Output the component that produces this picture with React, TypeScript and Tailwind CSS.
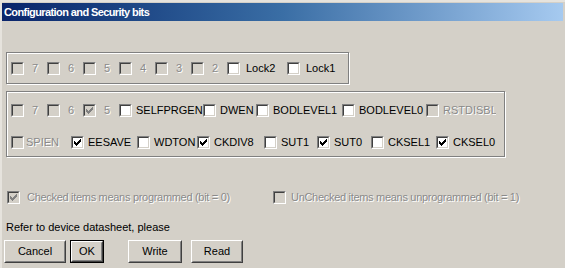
import React from 'react';

interface BitItem {
  label: string;
  width: string;
  checked?: boolean;
  disabled?: boolean;
  gap?: string;
  tight?: boolean;
}

// Classic sunken checkbox
const CheckBox: React.FC<{ checked?: boolean; disabled?: boolean }> = ({ checked, disabled }) => (
  <span className="shrink-0 w-[13px] h-[13px] border border-t-[#808080] border-l-[#808080] border-r-white border-b-white">
    <span
      className={
        'flex items-center justify-center w-[11px] h-[11px] border border-t-[#404040] border-l-[#404040] border-r-[#d4d0c8] border-b-[#d4d0c8] ' +
        (disabled ? 'bg-[#d4d0c8]' : 'bg-white')
      }
    >
      {checked && (
        <svg width="7" height="7" viewBox="0 0 7 7">
          <path
            d="M0 2h1v1h1v1h1v-1h1v-1h1v-1h1v-1h1v3h-1v1h-1v1h-1v1h-1v1h-1v-1h-1v-1h-1v-1h-1z"
            fill={disabled ? '#808080' : '#000'}
          />
        </svg>
      )}
    </span>
  </span>
);

const Bit: React.FC<BitItem> = ({ label, width, checked, disabled, gap, tight }) => (
  <div className={'flex items-center h-[16px] overflow-hidden whitespace-nowrap ' + width}>
    <CheckBox checked={checked} disabled={disabled} />
    <span
      className={
        (gap ?? 'ml-[4px]') +
        ' leading-none ' +
        (tight ? 'tracking-[-0.3px] ' : '') +
        (disabled ? 'text-[#8a8a8a] [text-shadow:1px_1px_0_#fff]' : 'text-black')
      }
    >
      {label}
    </span>
  </div>
);

const lockBits: BitItem[] = [
  { label: '7', width: 'w-[36px]', disabled: true, gap: 'ml-[8px]' },
  { label: '6', width: 'w-[36px]', disabled: true, gap: 'ml-[8px]' },
  { label: '5', width: 'w-[36px]', disabled: true, gap: 'ml-[8px]' },
  { label: '4', width: 'w-[36px]', disabled: true, gap: 'ml-[8px]' },
  { label: '3', width: 'w-[36px]', disabled: true, gap: 'ml-[8px]' },
  { label: '2', width: 'w-[36px]', disabled: true, gap: 'ml-[8px]' },
  { label: 'Lock2', width: 'w-[60px]', gap: 'ml-[6px]' },
  { label: 'Lock1', width: 'w-[50px]', gap: 'ml-[6px]' },
];

const highFuses: BitItem[] = [
  { label: '7', width: 'w-[36px]', disabled: true, gap: 'ml-[8px]' },
  { label: '6', width: 'w-[36px]', disabled: true, gap: 'ml-[8px]' },
  { label: '5', width: 'w-[36px]', disabled: true, checked: true, gap: 'ml-[8px]' },
  { label: 'SELFPRGEN', width: 'w-[84px]' },
  { label: 'DWEN', width: 'w-[53px]' },
  { label: 'BODLEVEL1', width: 'w-[86px]' },
  { label: 'BODLEVEL0', width: 'w-[84px]' },
  { label: 'RSTDISBL', width: 'w-[70px]', disabled: true },
];

const lowFuses: BitItem[] = [
  { label: 'SPIEN', width: 'w-[60px]', disabled: true, gap: 'ml-[2px]' },
  { label: 'EESAVE', width: 'w-[66px]', checked: true },
  { label: 'WDTON', width: 'w-[60px]' },
  { label: 'CKDIV8', width: 'w-[67px]', checked: true },
  { label: 'SUT1', width: 'w-[53px]' },
  { label: 'SUT0', width: 'w-[54px]', checked: true },
  { label: 'CKSEL1', width: 'w-[65px]' },
  { label: 'CKSEL0', width: 'w-[60px]', checked: true },
];

const WinButton: React.FC<{ label: string; width: string; isDefault?: boolean }> = ({ label, width, isDefault }) => (
  <div className={'h-[23px] ' + width + (isDefault ? ' border border-black' : '')}>
    <div className="h-full border border-t-white border-l-white border-r-[#404040] border-b-[#404040]">
      <div className="h-full flex items-center justify-center border border-t-[#d4d0c8] border-l-[#d4d0c8] border-r-[#808080] border-b-[#808080] text-black">
        {label}
      </div>
    </div>
  </div>
);

export default function App() {
  return (
    <div className="w-[565px] h-[268px] overflow-hidden bg-[#d4d0c8] font-['Liberation_Sans',Arial,sans-serif] text-[11px] border-t-2 border-l-2 border-t-[#e6e3dd] border-l-[#e6e3dd]">
      {/* Title bar */}
      <div className="pt-[1px] pr-[2px]">
        <div className="h-[18px] flex items-center pl-[2px] bg-gradient-to-r from-[#0a246a] via-[#3a6ea5] to-[#a6caf0] text-white font-bold text-[11px] tracking-[-0.6px]">
          Configuration and Security bits
        </div>
      </div>

      <div className="pl-[4px]">
        {/* Lock bits */}
        <div className="mt-[31px] w-[343px] h-[32px] flex items-center pl-[4px] pt-[1px] border border-[#808080] shadow-[inset_1px_1px_0_#fff,1px_1px_0_#fff]">
          {lockBits.map((b, i) => (
            <Bit key={i} {...b} />
          ))}
        </div>

        {/* Fuse bits */}
        <div className="mt-[7px] w-[499px] h-[66px] flex flex-col pl-[4px] pt-[10px] gap-[16px] border border-[#808080] shadow-[inset_1px_1px_0_#fff,1px_1px_0_#fff]">
          <div className="flex">
            {highFuses.map((b, i) => (
              <Bit key={i} {...b} />
            ))}
          </div>
          <div className="flex">
            {lowFuses.map((b, i) => (
              <Bit key={i} {...b} />
            ))}
          </div>
        </div>

        {/* Legend */}
        <div className="mt-[32px] flex pl-[1px]">
          <Bit label="Checked items means programmed (bit = 0)" width="w-[266px]" checked disabled gap="ml-[7px]" tight />
          <Bit label="UnChecked items means unprogrammed (bit = 1)" width="w-[260px]" disabled gap="ml-[5px]" tight />
        </div>

        <div className="mt-[15px] h-[14px] leading-[14px] text-black">Refer to device datasheet, please</div>

        {/* Buttons */}
        <div className="mt-[6px] flex -ml-[2px]">
          <WinButton label="Cancel" width="w-[62px]" />
          <div className="ml-[4px]">
            <WinButton label="OK" width="w-[34px]" isDefault />
          </div>
          <div className="ml-[24px]">
            <WinButton label="Write" width="w-[54px]" />
          </div>
          <div className="ml-[9px]">
            <WinButton label="Read" width="w-[52px]" />
          </div>
        </div>
      </div>
    </div>
  );
}
